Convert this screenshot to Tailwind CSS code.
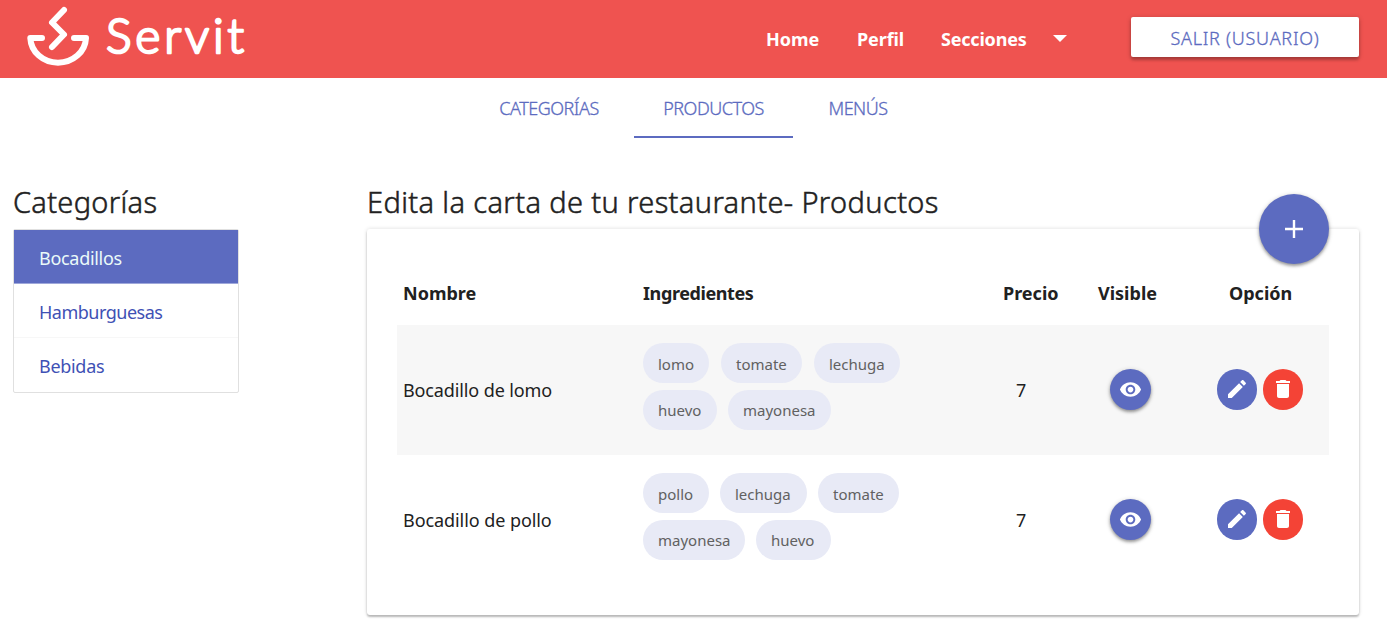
<!DOCTYPE html>
<html lang="es">
<head>
<meta charset="utf-8">
<title>Servit</title>
<script src="https://cdn.jsdelivr.net/npm/@tailwindcss/browser@4"></script>
</head>
<body class="bg-white text-[#212121] font-['Noto_Sans',sans-serif] text-[18px] leading-[27px] h-[637px] overflow-hidden">
<svg class="hidden">
  <symbol id="eye" viewBox="0 0 24 24"><path fill="currentColor" d="M12 4.500C7 4.500 2.730 7.610 1 12c1.730 4.390 6 7.500 11 7.500s9.270-3.110 11-7.500c-1.730-4.390-6-7.500-11-7.500zM12 17c-2.760 0-5-2.240-5-5s2.240-5 5-5 5 2.240 5 5-2.240 5-5 5zm0-8c-1.660 0-3 1.340-3 3s1.340 3 3 3 3-1.340 3-3-1.340-3-3-3z"/></symbol>
  <symbol id="edit" viewBox="0 0 24 24"><path fill="currentColor" d="M3 17.250V21h3.750L17.810 9.940l-3.750-3.750L3 17.250zM20.710 7.040c.39-.39.39-1.020 0-1.410l-2.340-2.340c-.39-.39-1.020-.39-1.410 0l-1.830 1.830 3.750 3.750 1.830-1.830z"/></symbol>
  <symbol id="trash" viewBox="0 0 24 24"><path fill="currentColor" d="M6 19c0 1.100.9 2 2 2h8c1.100 0 2-.9 2-2V7H6v12zM19 4h-3.500l-1-1h-5l-1 1H5v2h14V4z"/></symbol>
</svg>
<header class="flex h-[78px] bg-[#ef5350] text-white">
  <svg class="w-[270px] h-[78px] shrink-0" viewBox="0 0 270 78">
    <g fill="none" stroke="#fff" stroke-width="6" stroke-linecap="round" stroke-linejoin="round">
      <path d="M64 10 52 22.500 64 34.500 52 47"/>
      <path d="M42 38H30.300C31 52 43 62.700 58 62.700S85.300 52 86 38H74"/>
    </g>
    <text x="106" y="53" textLength="138" font-family="Lato" font-weight="300" font-size="48" fill="#fff" stroke="#fff" stroke-width="2.500" stroke-linejoin="round">Servit</text>
  </svg>
  <nav class="flex items-center ml-[496px] font-bold">
    <a class="w-[91px]">Home</a>
    <a class="w-[84px] tracking-[-0.1px]">Perfil</a>
    <a class="w-[112px] tracking-[-0.2px]">Secciones</a>
    <svg class="w-[14px] h-[7px] -mt-[2px]" viewBox="0 0 14 7"><path fill="#fff" d="M0 0h14L7 7z"/></svg>
  </nav>
  <button class="ml-[64px] mt-[17px] w-[228px] h-[40px] pt-[2px] rounded-[2px] bg-white text-[#5c6bc0] font-light [-webkit-text-stroke:0.3px] tracking-[0.75px] shadow-[0_3px_3px_rgba(0,0,0,.2),0_1px_5px_rgba(0,0,0,.22)] whitespace-nowrap">SALIR (USUARIO)</button>
</header>
<nav class="flex h-[60px] pl-[469px] leading-[61px] text-center text-[#5c6bc0] font-light [-webkit-text-stroke:0.3px] tracking-[-0.5px]">
  <a class="w-[160px]">CATEGORÍAS</a>
  <a class="w-[159px] ml-[5px] border-b-2 border-[#5c6bc0]">PRODUCTOS</a>
  <a class="w-[130px]">MENÚS</a>
</nav>
<main class="flex pt-[45px]">
  <aside class="w-[367px] pl-[13px]">
    <h2 class="h-[46px] text-[29px] leading-[38px] font-light [-webkit-text-stroke:0.5px] tracking-[0.3px]">Categorías</h2>
    <ul class="w-[226px] h-[164px] border border-[#e0e0e0] rounded-[2px] text-[#3f51b5] tracking-[-0.3px]">
      <li class="h-[54px] pl-[25px] leading-[56px] bg-[#5c6bc0] text-[#eafaf9] border-b border-[#9fa8da]">Bocadillos</li>
      <li class="h-[54px] pl-[25px] leading-[56px] border-b border-[#f7f7f7] tracking-[-0.5px]">Hamburguesas</li>
      <li class="h-[54px] pl-[25px] leading-[56px]">Bebidas</li>
    </ul>
  </aside>
  <section class="w-[992px]">
    <h2 class="h-[46px] text-[29px] leading-[38px] font-light [-webkit-text-stroke:0.5px] tracking-[0.37px]">Edita la carta de tu restaurante- Productos</h2>
    <div class="relative h-[386px] px-[30px] pt-[34px] rounded-[3px] shadow-[0_2px_2px_rgba(0,0,0,.24),0_0_4px_rgba(0,0,0,.14)]">
      <button class="absolute right-[30px] -top-[35px] flex items-center justify-center size-[70px] rounded-full bg-[#5c6bc0] shadow-[0_2px_3px_rgba(0,0,0,.3),0_1px_5px_rgba(0,0,0,.2)]">
        <svg class="size-[18px]" viewBox="0 0 18 18"><path d="M9 0v18M0 9h18" stroke="#fff" stroke-width="2.400"/></svg>
      </button>
      <div class="grid grid-cols-[240px_360px_95px_131px_1fr] h-[62px] pl-[6px] pb-[2px] items-center font-bold">
        <div>Nombre</div><div class="tracking-[-0.4px]">Ingredientes</div><div>Precio</div><div>Visible</div><div>Opción</div>
      </div>
      <div class="grid grid-cols-[240px_373px_94px_107px_46px_40px] h-[130px] pl-[6px] items-center bg-[#f7f7f7]">
        <div class="tracking-[-0.12px]">Bocadillo de lomo</div>
        <div class="text-[15px] text-[#616161] leading-[42px] pb-[7px]">
          <div class="flex gap-[12px]"><div class="px-[15px] h-[40px] w-[66px] bg-[#e8eaf6] rounded-full">lomo</div><div class="px-[15px] h-[40px] w-[81px] bg-[#e8eaf6] rounded-full">tomate</div><div class="px-[15px] h-[40px] w-[86px] bg-[#e8eaf6] rounded-full">lechuga</div></div>
          <div class="flex gap-[11px] mt-[7px] leading-[40px]"><div class="px-[15px] h-[40px] w-[74px] bg-[#e8eaf6] rounded-full">huevo</div><div class="px-[15px] h-[40px] w-[103px] bg-[#e8eaf6] rounded-full">mayonesa</div></div>
        </div>
        <div>7</div>
        <div class="flex items-center justify-center size-[41px] -mt-[2px] rounded-full bg-[#5c6bc0] text-white shadow-[0_2px_3px_rgba(0,0,0,.3),0_1px_5px_rgba(0,0,0,.2)]"><svg class="size-[23px]"><use href="#eye"/></svg></div>
        <div class="flex items-center justify-center w-[40px] h-[41px] -mt-[2px] rounded-full bg-[#5c6bc0] text-white"><svg class="size-[24px]"><use href="#edit"/></svg></div>
        <div class="flex items-center justify-center w-[40px] h-[41px] -mt-[2px] rounded-full bg-[#f44336] text-white"><svg class="size-[24px]"><use href="#trash"/></svg></div>
      </div>
      <div class="grid grid-cols-[240px_373px_94px_107px_46px_40px] h-[130px] pl-[6px] items-center">
        <div class="tracking-[-0.07px]">Bocadillo de pollo</div>
        <div class="text-[15px] text-[#616161] leading-[42px] pb-[7px]">
          <div class="flex gap-[11px]"><div class="px-[15px] h-[40px] w-[66px] bg-[#e8eaf6] rounded-full">pollo</div><div class="px-[15px] h-[40px] w-[87px] bg-[#e8eaf6] rounded-full">lechuga</div><div class="px-[15px] h-[40px] w-[81px] bg-[#e8eaf6] rounded-full">tomate</div></div>
          <div class="flex gap-[11px] mt-[7px] leading-[40px]"><div class="px-[15px] h-[40px] w-[102px] bg-[#e8eaf6] rounded-full">mayonesa</div><div class="px-[15px] h-[40px] w-[75px] bg-[#e8eaf6] rounded-full">huevo</div></div>
        </div>
        <div>7</div>
        <div class="flex items-center justify-center size-[41px] -mt-[2px] rounded-full bg-[#5c6bc0] text-white shadow-[0_2px_3px_rgba(0,0,0,.3),0_1px_5px_rgba(0,0,0,.2)]"><svg class="size-[23px]"><use href="#eye"/></svg></div>
        <div class="flex items-center justify-center w-[40px] h-[41px] -mt-[2px] rounded-full bg-[#5c6bc0] text-white"><svg class="size-[24px]"><use href="#edit"/></svg></div>
        <div class="flex items-center justify-center w-[40px] h-[41px] -mt-[2px] rounded-full bg-[#f44336] text-white"><svg class="size-[24px]"><use href="#trash"/></svg></div>
      </div>
    </div>
  </section>
</main>
</body>
</html>
